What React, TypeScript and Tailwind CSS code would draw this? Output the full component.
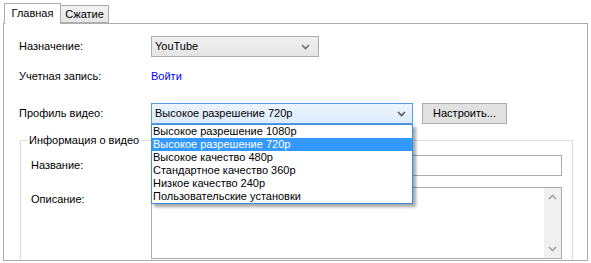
import React from "react";

const profiles = [
  "Высокое разрешение 1080p",
  "Высокое разрешение 720p",
  "Высокое качество 480p",
  "Стандартное качество 360p",
  "Низкое качество 240p",
  "Пользовательские установки",
];

function Chevron({ className }: { className?: string }) {
  return (
    <svg width="9" height="6" viewBox="0 0 9 6" className={className}>
      <path d="M1 1 L4.5 4.5 L8 1" fill="none" stroke="currentColor" strokeWidth="1.6" />
    </svg>
  );
}

export default function App() {
  return (
    <div
      className="w-[591px] h-[263px] bg-white text-[11px] text-black overflow-hidden flex flex-col"
      style={{ fontFamily: '"Liberation Sans", Arial, sans-serif' }}
    >
      {/* Tabs */}
      <div className="flex items-end pl-[4px] pt-[3px] relative z-10">
        <div className="h-[21px] w-[57px] border border-b-0 border-[#acacac] bg-white flex items-center justify-center pb-[2px] -mb-px">
          Главная
        </div>
        <div className="h-[18px] w-[48px] border border-l-0 border-[#acacac] bg-gradient-to-b from-[#f3f3f3] to-[#e5e5e5] flex items-center justify-center">
          Сжатие
        </div>
      </div>

      {/* Panel */}
      <div className="relative mx-[3px] h-[238px] border border-[#acacac] overflow-hidden">
        <div className="flex flex-col pl-[15px]">
          {/* Назначение */}
          <div className="flex items-center h-[21px] mt-[12px]">
            <span className="w-[132px]">Назначение:</span>
            <div className="w-[168px] h-[21px] border border-[#acacac] bg-gradient-to-b from-[#f0f0f0] to-[#e5e5e5] flex items-center justify-between pl-[3px] pr-[8px]">
              <span>YouTube</span>
              <Chevron className="text-[#707070]" />
            </div>
          </div>

          {/* Учетная запись */}
          <div className="flex items-center h-[21px] mt-[9px]">
            <span className="w-[132px]">Учетная запись:</span>
            <span className="text-[#0000ff]">Войти</span>
          </div>

          {/* Профиль видео */}
          <div className="flex items-center h-[21px] mt-[16px]">
            <span className="w-[132px]">Профиль видео:</span>
            <div className="relative w-[262px] h-[21px] border border-[#569de5] bg-gradient-to-b from-[#ecf4fc] to-[#dcecfc] flex items-center justify-between pl-[3px] pr-[6px]">
              <span>Высокое разрешение 720p</span>
              <Chevron className="text-[#555]" />
              {/* Open list */}
              <div className="absolute left-[-1px] top-[20px] w-[262px] border border-[#3c8ce0] bg-white z-20 shadow-[3px_3px_3px_rgba(0,0,0,0.35)]">
                {profiles.map((p, i) => (
                  <div
                    key={p}
                    className={
                      "h-[13px] leading-[13px] pl-[1px] " +
                      (i === 1 ? "bg-[#3399ff] text-white" : "")
                    }
                  >
                    {p}
                  </div>
                ))}
              </div>
            </div>
            <button className="ml-[9px] w-[85px] h-[21px] border border-[#adadad] bg-[#e1e1e1] flex items-center justify-center">
              Настроить...
            </button>
          </div>

          {/* Информация о видео */}
          <div className="relative mt-[16px] ml-[1px] w-[553px] h-[140px] border border-[#dcdcdc]">
            <span className="absolute left-[6px] top-[-8px] bg-white px-[2px] leading-[14px]">
              Информация о видео
            </span>
            <div className="flex flex-col pl-[10px]">
              <div className="flex items-center mt-[14px]">
                <span className="w-[120px]">Название:</span>
                <div className="w-[411px] h-[21px] border border-[#acacac] bg-white" />
              </div>
              <div className="flex mt-[11px]">
                <span className="w-[120px] pt-[4px]">Описание:</span>
                <div className="w-[411px] h-[72px] border border-[#acacac] bg-white flex justify-end">
                  <div className="w-[17px] bg-[#f0f0f0] flex flex-col items-center justify-between py-[6px] text-[#a3a3a3]">
                    <Chevron className="rotate-180" />
                    <Chevron />
                  </div>
                </div>
              </div>
            </div>
          </div>
        </div>
      </div>
    </div>
  );
}
